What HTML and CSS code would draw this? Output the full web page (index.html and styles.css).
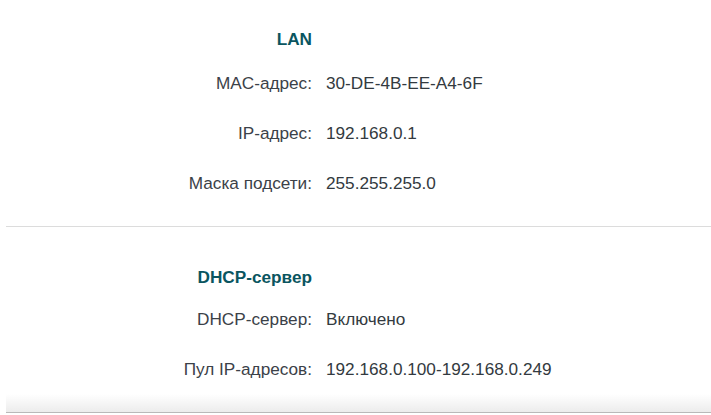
FILE: index.html
```html
<!DOCTYPE html>
<html lang="ru">
<head>
<meta charset="utf-8">
<link rel="stylesheet" href="styles.css">
</head>
<body>
<div class="page">
  <section class="group group-lan">
    <h2 class="title">LAN</h2>
    <div class="row"><span class="label">MAC-адрес:</span><span class="value">30-DE-4B-EE-A4-6F</span></div>
    <div class="row"><span class="label">IP-адрес:</span><span class="value">192.168.0.1</span></div>
    <div class="row"><span class="label">Маска подсети:</span><span class="value">255.255.255.0</span></div>
  </section>
  <hr class="divider">
  <section class="group group-dhcp">
    <h2 class="title">DHCP-сервер</h2>
    <div class="row"><span class="label">DHCP-сервер:</span><span class="value">Включено</span></div>
    <div class="row"><span class="label">Пул IP-адресов:</span><span class="value">192.168.0.100-192.168.0.249</span></div>
  </section>
  <div class="footer"></div>
</div>
</body>
</html>
```
FILE: styles.css
```css
html, body {
  margin: 0;
  padding: 0;
  background: #fff;
}
body {
  font-family: "Liberation Sans", Arial, sans-serif;
  font-size: 17.2px;
  line-height: 20px;
  color: #3b4148;
  width: 711px;
  height: 415px;
  overflow: hidden;
}
.page {
  padding-left: 6px;
}
.group {
  display: flex;
  flex-direction: column;
  gap: 30px;
}
.group-lan {
  padding-top: 29px;
}
.group-dhcp {
  padding-top: 40px;
}
.title {
  margin: 0 0 -6px 0;
  width: 306px;
  text-align: right;
  font-size: 17.2px;
  line-height: 20px;
  font-weight: bold;
  color: #0a5560;
}
.group-dhcp .title {
  margin-bottom: -8px;
}
.row {
  display: flex;
  gap: 14px;
}
.label {
  width: 306px;
  text-align: right;
  color: #3b4148;
}
.value {
  color: #333a40;
}
.divider {
  margin: 33px 0 0 0;
  border: 0;
  height: 1px;
  background: #dcdcdc;
}
.footer {
  margin-top: 15px;
  height: 18px;
  background: linear-gradient(#ffffff, #ececec);
  border-bottom: 1px solid #b9b9b9;
}
```
